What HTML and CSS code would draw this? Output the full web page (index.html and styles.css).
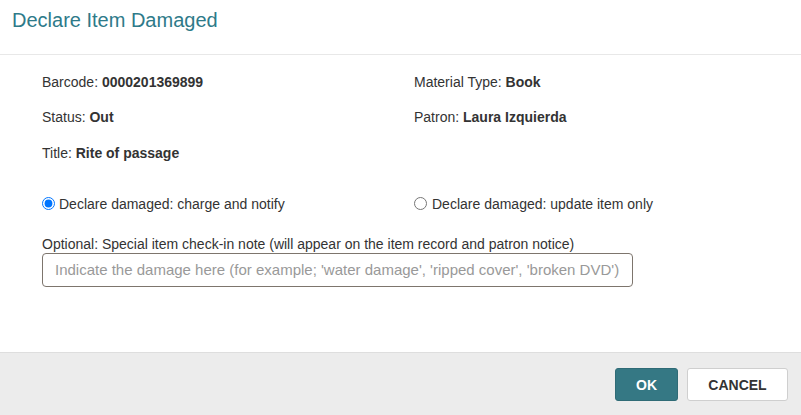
FILE: index.html
```html
<!DOCTYPE html>
<html lang="en">
<head>
<meta charset="utf-8">
<title>Declare Item Damaged</title>
<link rel="stylesheet" href="styles.css">
</head>
<body>
<div class="modal">
  <header class="modal-header">
    <h1 class="modal-title">Declare Item Damaged</h1>
  </header>
  <main class="modal-body">
    <div class="info-grid">
      <div class="info-item">Barcode: <b>0000201369899</b></div>
      <div class="info-item">Material Type: <b>Book</b></div>
      <div class="info-item">Status: <b>Out</b></div>
      <div class="info-item">Patron: <b>Laura Izquierda</b></div>
      <div class="info-item">Title: <b>Rite of passage</b></div>
    </div>
    <div class="options">
      <label class="option"><input type="radio" name="mode" class="radio" checked><span>Declare damaged: charge and notify</span></label>
      <label class="option option-right"><input type="radio" name="mode" class="radio"><span>Declare damaged: update item only</span></label>
    </div>
    <label class="note-label" for="note">Optional: Special item check-in note (will appear on the item record and patron notice)</label>
    <input id="note" class="note-input" type="text" placeholder="Indicate the damage here (for example; 'water damage', 'ripped cover', 'broken DVD')">
  </main>
  <footer class="modal-footer">
    <button class="btn btn-primary" type="button">OK</button>
    <button class="btn btn-default" type="button">CANCEL</button>
  </footer>
</div>
</body>
</html>
```
FILE: styles.css
```css
html, body {
  margin: 0;
  padding: 0;
  background: #fff;
}
body {
  font-family: "Liberation Sans", Arial, sans-serif;
  font-size: 14px;
  color: #333;
}
.modal {
  height: 415px;
  display: flex;
  flex-direction: column;
}
.modal-header {
  border-bottom: 1px solid #e8e8e8;
  padding: 9px 12px 0;
  box-sizing: border-box;
  height: 55px;
}
.modal-title {
  margin: 0;
  font-size: 20px;
  line-height: 22px;
  font-weight: normal;
  color: #2e7a89;
}
.modal-body {
  flex: 1;
  padding: 16.5px 42px 0;
  display: flex;
  flex-direction: column;
  align-items: flex-start;
}
.info-grid {
  display: grid;
  grid-template-columns: 372px auto;
  row-gap: 15.5px;
  line-height: 20px;
}
.info-item b {
  font-weight: bold;
  color: #333;
}
.options {
  margin-top: 31px;
  display: grid;
  grid-template-columns: 372px auto;
  line-height: 20px;
}
.option {
  display: flex;
  align-items: center;
  gap: 4px;
}
.option-right {
  gap: 5px;
}
.radio {
  margin: 0;
  width: 13px;
  height: 13px;
  flex: none;
}
.note-label {
  margin-top: 21px;
  line-height: 18px;
}
.note-input {
  box-sizing: border-box;
  width: 591px;
  height: 34px;
  margin: 0;
  padding: 0 12px;
  border: 1px solid #7d756d;
  border-radius: 4px;
  font-family: "Liberation Sans", Arial, sans-serif;
  font-size: 15px;
  color: #333;
  outline: none;
}
.note-input::placeholder {
  color: #999;
}
.modal-footer {
  height: 63px;
  box-sizing: border-box;
  border-top: 1px solid #dedede;
  background: #ececec;
  display: flex;
  justify-content: flex-end;
  align-items: flex-start;
  gap: 9px;
  padding: 15px 13px 0;
}
.btn {
  height: 33px;
  font-family: "Liberation Sans", Arial, sans-serif;
  font-size: 14px;
  font-weight: bold;
  border-radius: 3px;
  padding: 0;
  cursor: pointer;
}
.btn-primary {
  width: 63px;
  background: #357884;
  border: 1px solid #2f6b76;
  color: #fff;
}
.btn-default {
  width: 101px;
  background: #fff;
  border: 1px solid #cfcfcf;
  color: #333;
}
```
